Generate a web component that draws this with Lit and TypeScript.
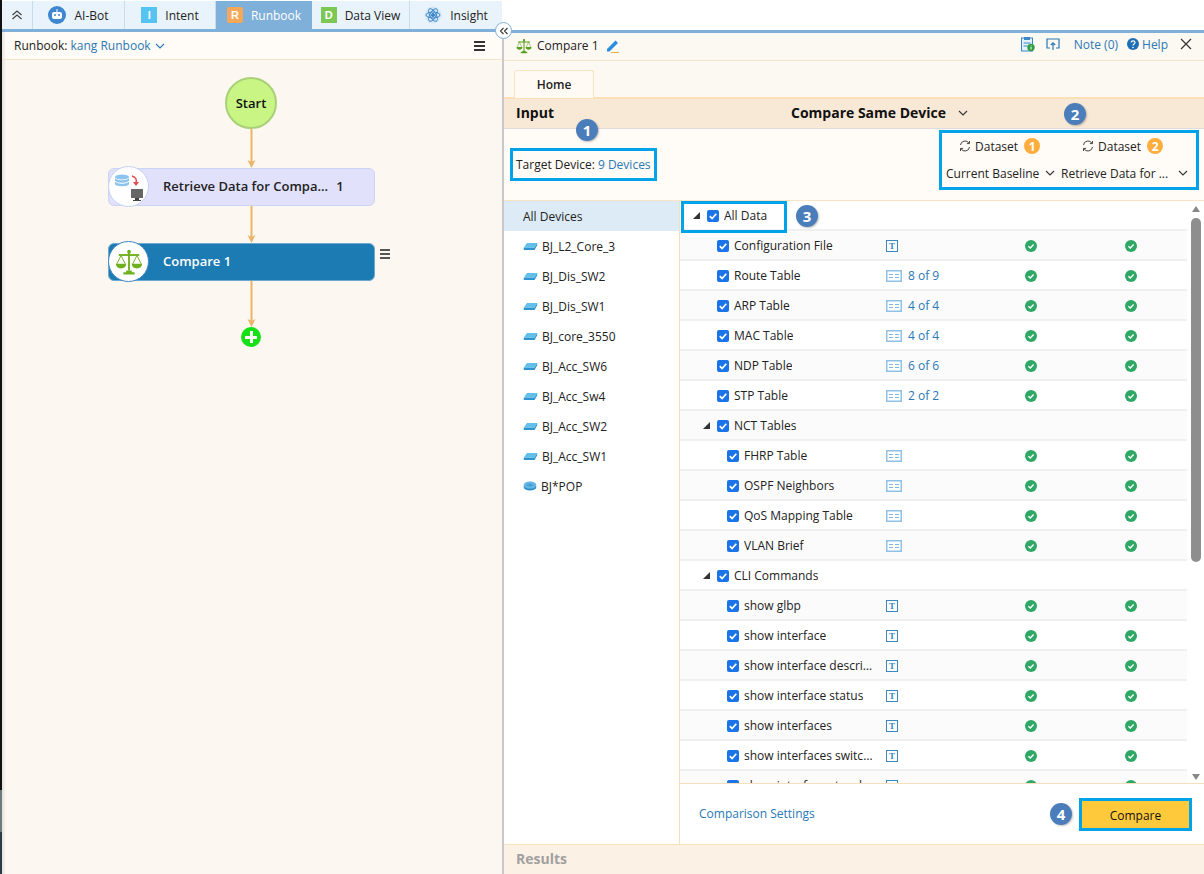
import { LitElement, html, css } from "lit";
import { customElement } from "lit/decorators.js";

const chev = (c = "#333") => html`<svg viewBox="0 0 10 6" width="10" height="6"><path d="M1 1l4 4 4-4" fill="none" stroke=${c} stroke-width="1.100"/></svg>`;
const ok = html`<svg viewBox="0 0 12 12" width="12" height="12"><circle cx="6" cy="6" r="6" fill="#2fa866"/><path d="M3.400 6.200l1.900 1.800 3.300-3.400" fill="none" stroke="#fff" stroke-width="1.400"/></svg>`;
const tIcon = html`<span class="ticon">T</span>`;
const tbl = html`<svg viewBox="0 0 16 12" width="16" height="12"><rect x=".75" y=".75" width="14.500" height="10.500" fill="#fff" stroke="#8fc1e6" stroke-width="1.500"/><path d="M3 4.500h4M9 4.500h4M3 7.500h4M9 7.500h4" stroke="#7fb6e0"/></svg>`;
const sw = html`<svg viewBox="0 0 16 10" width="15" height="9"><path d="M4 1h11.500l-3 5.500H.5z" fill="#63c0ea"/><path d="M.5 6.500h12V9H.5zM12.500 6.500l3-5.500v2.500l-3 5.500z" fill="#2e93cf"/></svg>`;
const router = html`<svg viewBox="0 0 15 11" width="14" height="10"><ellipse cx="7.500" cy="6.500" rx="7" ry="4" fill="#2e8fc6"/><ellipse cx="7.500" cy="4.500" rx="7" ry="4" fill="#63b6e4"/><path d="M4 4.500h7M7.500 2.500v4" stroke="#2e8fc6" stroke-width=".8"/></svg>`;
const refresh = html`<svg viewBox="0 0 12 12" width="12" height="12" fill="none" stroke="#444" stroke-width="1"><path d="M1.500 5A4.600 4.600 0 0 1 10 3.200"/><path d="M10.500 1v2.600H7.900"/><path d="M10.500 7A4.600 4.600 0 0 1 2 8.800"/><path d="M1.500 11V8.400h2.600"/></svg>`;
const scale = (w: number, h: number, c: string) => html`<svg viewBox="0 0 30 30" width=${w} height=${h}><g fill=${c}><path d="M14 3h2v21h-2z"/><path d="M4 6.500h22v2H4z"/><circle cx="15" cy="4" r="2"/><path d="M9 26h12v2.400H9zM12 24h6v2h-6z"/><path d="M1 17h11c0 3.200-2.400 5-5.500 5S1 20.200 1 17zM18 17h11c0 3.200-2.400 5-5.500 5S18 20.200 18 17z"/></g><path d="M6.500 8L2 17M6.500 8l4.500 9M23.500 8L19 17M23.500 8l4.500 9" stroke=${c} fill="none" stroke-width="1"/></svg>`;

type Row = { n: string; lvl: 0 | 1 | 2; caret?: boolean; icon?: "t" | "g"; count?: string; checks?: boolean };
const rows: Row[] = [
  { n: "All Data", lvl: 0, caret: true },
  { n: "Configuration File", lvl: 1, icon: "t", checks: true },
  { n: "Route Table", lvl: 1, icon: "g", count: "8 of 9", checks: true },
  { n: "ARP Table", lvl: 1, icon: "g", count: "4 of 4", checks: true },
  { n: "MAC Table", lvl: 1, icon: "g", count: "4 of 4", checks: true },
  { n: "NDP Table", lvl: 1, icon: "g", count: "6 of 6", checks: true },
  { n: "STP Table", lvl: 1, icon: "g", count: "2 of 2", checks: true },
  { n: "NCT Tables", lvl: 1, caret: true },
  { n: "FHRP Table", lvl: 2, icon: "g", checks: true },
  { n: "OSPF Neighbors", lvl: 2, icon: "g", checks: true },
  { n: "QoS Mapping Table", lvl: 2, icon: "g", checks: true },
  { n: "VLAN Brief", lvl: 2, icon: "g", checks: true },
  { n: "CLI Commands", lvl: 1, caret: true },
  { n: "show glbp", lvl: 2, icon: "t", checks: true },
  { n: "show interface", lvl: 2, icon: "t", checks: true },
  { n: "show interface description", lvl: 2, icon: "t", checks: true },
  { n: "show interface status", lvl: 2, icon: "t", checks: true },
  { n: "show interfaces", lvl: 2, icon: "t", checks: true },
  { n: "show interfaces switchport", lvl: 2, icon: "t", checks: true },
  { n: "show interfaces trunk", lvl: 2, icon: "t", checks: true },
];
const devices = ["BJ_L2_Core_3", "BJ_Dis_SW2", "BJ_Dis_SW1", "BJ_core_3550", "BJ_Acc_SW6", "BJ_Acc_Sw4", "BJ_Acc_SW2", "BJ_Acc_SW1"];

@customElement("app-root")
export class AppRoot extends LitElement {
  static styles = css`
    :host { display: block; width: 1204px; height: 874px; overflow: hidden; font: 12px "Open Sans", sans-serif; color: #222; background: #fff; }
    * { box-sizing: border-box; }
    svg { display: block; flex: none; }
    .page { height: 874px; display: flex; position: relative; }
    .edge { width: 2px; flex: none; background: linear-gradient(180deg, #111 0, #111 790px, #6c7a80 790px, #6c7a80 832px, #2b3a44 832px); }
    .col { flex: 1; min-width: 0; display: flex; flex-direction: column; }
    .topbar { height: 32px; flex: none; display: flex; border-bottom: 3px solid #7eb0d9; background: #fff; padding-top: 1px; width: 501px; }
    .tab { display: flex; align-items: center; justify-content: center; gap: 8px; background: #e9f3fb; border-right: 1px solid #c9dcea; height: 28px; font-size: 12px; color: #222; flex: none; }
    .tab.active { background: #7eb0d9; color: #fff; border-right: none; }
    .ti { width: 16px; height: 16px; display: flex; align-items: center; justify-content: center; font: bold 11px "Liberation Sans", sans-serif; color: #fff; }
    .main { flex: 1; display: flex; min-height: 0; margin-top: -2px; }
    .left { width: 500px; flex: none; display: flex; flex-direction: column; background: linear-gradient(90deg, #e4dfd9 0, #fcf7f1 4px); margin-top: 2px; }
    .lhead { height: 28px; flex: none; display: flex; align-items: center; justify-content: space-between; padding: 0 17px 0 12px; background: linear-gradient(90deg, #e8e4de 0, #fffbf6 4px); border-bottom: 1px solid #f6e3c9; }
    .lhead .who { display: flex; align-items: center; gap: 4px; }
    .link { color: #2a78b5; }
    .hamb { width: 11px; height: 10px; border-top: 2px solid #333; border-bottom: 2px solid #333; position: relative; }
    .hamb::after { content: ""; position: absolute; left: 0; right: 0; top: 2px; height: 2px; background: #333; }
    .canvas { flex: 1; display: flex; flex-direction: column; padding: 17px 0 0 106px; }
    .flowcol { width: 267px; display: flex; flex-direction: column; align-items: flex-start; }
    .start { width: 52px; height: 52px; margin-left: 117px; border-radius: 50%; background: #c8f584; border: 2px solid #aad078; display: flex; align-items: center; justify-content: center; font-size: 13px; font-weight: 600; color: #111; }
    .arrow { width: 9px; display: block; flex: none; margin-left: 138.500px; }
    .node { width: 267px; height: 38px; position: relative; border-radius: 6px; display: flex; align-items: center; padding: 0 0 2px 54px; font-size: 13px; font-weight: 600; }
    .node.a { background: #e1e1fb; border: 1px solid #ccd4f5; color: #222; gap: 8px; }
    .node.b { background: #1b7bb2; border: 1px solid #6fa8cf; color: #fff; }
    .disc { position: absolute; left: -1px; top: -3px; width: 41px; height: 41px; border-radius: 50%; background: #fff; border: 1px solid #c3d1f5; display: flex; align-items: center; justify-content: center; }
    .node.b .disc { border-color: #3f86c4; }
    .nmenu { position: absolute; left: 271px; top: 5px; width: 10px; height: 10px; border-top: 2px solid #555; border-bottom: 2px solid #555; }
    .nmenu::after { content: ""; position: absolute; left: 0; right: 0; top: 2px; height: 2px; background: #555; }
    .plus { width: 20px; height: 20px; margin-left: 133px; border-radius: 50%; background: #16e016; position: relative; flex: none; }
    .plus::before { content: ""; position: absolute; left: 4px; right: 4px; top: 8.500px; height: 3px; background: #fff; }
    .plus::after { content: ""; position: absolute; top: 4px; bottom: 4px; left: 8.500px; width: 3px; background: #fff; }
    .divider { width: 2px; flex: none; background: #c9c9c9; margin-top: 2px; }
    .collapse { position: absolute; left: 495px; top: 22px; width: 17px; height: 17px; border-radius: 50%; background: #fff; border: 1px solid #7eb0d9; display: flex; align-items: center; justify-content: center; }
    .right { flex: 1; min-width: 0; display: flex; flex-direction: column; border-top: 3px solid #7eb0d9; background: #fcf8f2; }
    .rtitle { height: 29px; flex: none; display: flex; align-items: center; padding: 0 12px 1px 12px; border-bottom: 1px solid #f6e3c9; margin-top: -1px; }
    .rtitle .name { margin-left: 5px; }
    .rtitle .pen { margin-left: 7px; }
    .grow { flex: 1; }
    .rt-r { display: flex; align-items: center; margin-bottom: 3px; }
    .tabs { height: 38px; flex: none; display: flex; align-items: flex-end; padding-left: 10px; border-bottom: 2px solid #fbdfb6; }
    .home { width: 80px; height: 28px; border: 1px solid #f9e3c4; border-bottom: none; border-radius: 3px 3px 0 0; background: #fffaf3; display: flex; align-items: center; justify-content: center; font-weight: 600; font-size: 12px; margin-bottom: -1px; }
    .inputbar { height: 30px; flex: none; background: #f8e9d6; border-bottom: 1px solid #ddd; display: flex; align-items: center; padding: 0 0 2px 12px; font: 700 14px "Open Sans", sans-serif; color: #111; }
    .inputbar .mid { margin-left: 237px; display: flex; align-items: center; gap: 12px; }
    .target { height: 71px; flex: none; background: #fffbf6; display: flex; justify-content: space-between; align-items: flex-start; padding: 1px 5px 0 6px; position: relative; }
    .hl { border: 3px solid #00a3e8; }
    .tbox { margin-top: 18px; width: 147px; height: 33px; display: flex; align-items: center; padding-left: 3px; gap: 3px; background: #fffbf6; white-space: nowrap; }
    .dbox { width: 260px; height: 60px; display: grid; grid-template-columns: 116px 140px; grid-template-rows: 26px 28px; background: #fffbf6; }
    .dh { display: flex; align-items: center; gap: 4px; padding-left: 17px; }
    .dh + .dh { padding-left: 24px; }
    .num { width: 16px; height: 16px; border-radius: 50%; background: #ffad3d; color: #fff; font: 700 12px "Open Sans", sans-serif; display: flex; align-items: center; justify-content: center; margin-left: 2px; }
    .dsel { display: flex; align-items: center; justify-content: space-between; padding: 0 3px 0 4px; white-space: nowrap; }
    .dsel + .dsel { padding: 0 10px 0 3px; }
    .body { flex: 1; min-height: 0; display: flex; background: #fff; border-top: 1px solid #f8e3c6; }
    .devs { width: 176px; flex: none; border-right: 1px solid #f8dfbb; }
    .dev { height: 30px; display: flex; align-items: center; gap: 4px; padding-left: 19px; }
    .dev.all { background: #dcebf6; }
    .data { flex: 1; min-width: 0; display: flex; flex-direction: column; }
    .tree { flex: 1; min-height: 0; overflow: hidden; position: relative; }
    .row { height: 30px; width: 507px; display: grid; grid-template-columns: 201px 100px 100px 100px; align-items: center; border-bottom: 2px solid #f0f0f0; padding-top: 1px; }
    .row:nth-child(even) { background: #fbfbfb; }
    .nm { display: flex; align-items: center; min-width: 0; position: relative; }
    .nm.l0 { padding-left: 13px; }
    .nm.l1 { padding-left: 37px; }
    .nm.l2 { padding-left: 47px; }
    .nm.caret.l1 { padding-left: 23px; }
    .tri { width: 0; height: 0; border-left: 7px solid transparent; border-bottom: 7px solid #333; margin-right: 7px; flex: none; }
    .cb { width: 12px; height: 12px; border-radius: 2px; background: #1a73e8; display: flex; align-items: center; justify-content: center; flex: none; margin-right: 5px; }
    .txt { overflow: hidden; white-space: nowrap; text-overflow: ellipsis; max-width: 131px; }
    .ty { display: flex; align-items: center; gap: 6px; padding-left: 5px; color: #2a78b5; }
    .ticon { width: 12px; height: 12px; border: 1px solid #3a88bd; color: #3a88bd; font: 700 9px "Liberation Serif", serif; display: flex; align-items: center; justify-content: center; }
    .ck { display: flex; justify-content: center; padding-top: 1px; }
    .box3 { position: absolute; left: 1px; top: 0; width: 106px; height: 32px; pointer-events: none; }
    .sb { position: absolute; left: 507px; top: 0; bottom: 0; width: 17px; background: #fff; display: flex; flex-direction: column; align-items: center; }
    .sb .up { width: 0; height: 0; border-left: 4.500px solid transparent; border-right: 4.500px solid transparent; border-bottom: 6px solid #888; margin-top: 5px; }
    .sb .thumb { width: 10px; height: 344px; border-radius: 5px; background: #8e8e8e; margin-top: 6px; }
    .sb .dn { width: 0; height: 0; border-left: 4.500px solid transparent; border-right: 4.500px solid transparent; border-top: 6px solid #888; margin-top: auto; margin-bottom: 3px; }
    .foot { height: 61px; flex: none; border-top: 1px solid #f8dfbb; display: flex; align-items: center; justify-content: space-between; padding: 0 12px 0 19px; background: #fff; position: relative; }
    .foot .link { margin-bottom: 2px; }
    .cmp { width: 113px; height: 33px; background: #ffc93c; display: flex; align-items: center; justify-content: center; color: #111; font-size: 12px; padding-top: 2px; }
    .results { height: 30px; flex: none; background: #fcf1e5; border-top: 1px solid #f8dfbb; display: flex; align-items: center; padding: 0 0 2px 12px; font: 700 14px "Open Sans", sans-serif; color: #a0a0a0; }
    .badge { position: absolute; width: 22px; height: 22px; border-radius: 50%; background: #4a7dba; color: #fff; font: 700 15px "Open Sans", sans-serif; display: flex; align-items: center; justify-content: center; box-shadow: 1px 1px 2px rgba(0,0,0,.25); }
    .dbicon { margin-left: -3px; }
  `;

  private check() {
    return html`<span class="cb"><svg viewBox="0 0 12 12" width="12" height="12"><path d="M2.800 6.200l2.300 2.300 4.200-4.700" fill="none" stroke="#fff" stroke-width="1.700"/></svg></span>`;
  }

  private arrow(h: number) {
    return html`<svg class="arrow" viewBox="0 0 9 ${h}" height=${h}><path d="M4.500 0V${h - 3}" stroke="#ecb469" stroke-width="2"/><path d="M.5 ${h - 8}L4.500 ${h}l4-8-4 2z" fill="#ecb469"/></svg>`;
  }

  render() {
    return html`<div class="page">
      <div class="edge"></div>
      <div class="col">
      <div class="topbar">
        <div class="tab" style="width:31px"><svg viewBox="0 0 12 12" width="12" height="12" fill="none" stroke="#444" stroke-width="1.200"><path d="M1.500 6l4.500-4 4.500 4M1.500 10l4.500-4 4.500 4"/></svg></div>
        <div class="tab" style="width:92px">
          <svg viewBox="0 0 18 18" width="18" height="18"><circle cx="9" cy="9" r="9" fill="#3f86d0"/><rect x="4" y="6" width="10" height="7" rx="2" fill="#fff"/><circle cx="7" cy="9" r="1" fill="#3f86d0"/><circle cx="11" cy="9" r="1" fill="#3f86d0"/><path d="M9 3v3" stroke="#fff"/></svg>AI-Bot</div>
        <div class="tab" style="width:91px"><span class="ti" style="background:#55c4f2">I</span><span>Intent</span></div>
        <div class="tab active" style="width:96px"><span class="ti" style="background:#f5a85a;border-radius:2px">R</span><span>Runbook</span></div>
        <div class="tab" style="width:98px"><span class="ti" style="background:#7dc855">D</span><span>Data View</span></div>
        <div class="tab" style="width:92px;border-right:none">
          <svg viewBox="0 0 18 18" width="18" height="18" fill="none" stroke="#3a86c8"><circle cx="9" cy="9" r="8.500" fill="#d5e8f7" stroke="none"/><ellipse cx="9" cy="9" rx="7" ry="3"/><ellipse cx="9" cy="9" rx="7" ry="3" transform="rotate(60 9 9)"/><ellipse cx="9" cy="9" rx="7" ry="3" transform="rotate(120 9 9)"/><circle cx="9" cy="9" r="1.500" fill="#3a86c8"/></svg>Insight</div>
      </div>
      <div class="main">
        <section class="left">
          <div class="lhead"><span class="who"><span>Runbook: <span class="link">kang Runbook</span></span>${chev("#2a78b5")}</span><span class="hamb"></span></div>
          <div class="canvas"><div class="flowcol">
            <div class="start">Start</div>
            ${this.arrow(39)}
            <div class="node a"><span class="disc">
              <svg class="dbicon" viewBox="0 0 32 32" width="32" height="32"><ellipse cx="11" cy="6" rx="7" ry="2.500" fill="#8cc4ee"/><path d="M4 7v6c0 3 14 3 14 0V7c-2 3-12 3-14 0z" fill="#8cc4ee"/><path d="M4 10c2 3 12 3 14 0" stroke="#fff" fill="none"/><path d="M21 5c4 1 5 4 4 7" stroke="#e84b4b" fill="none" stroke-width="1.500"/><path d="M22 11h6l-3 4z" fill="#e84b4b"/><rect x="20" y="18" width="12" height="9" fill="#666"/><rect x="24" y="27" width="4" height="2" fill="#444"/><rect x="22" y="29" width="8" height="1" fill="#444"/></svg>
            </span><span>Retrieve Data for Compa...</span><span>1</span></div>
            ${this.arrow(37)}
            <div class="node b"><span class="disc">${scale(28, 28, "#6fb01e")}</span><span>Compare 1</span><span class="nmenu"></span></div>
            ${this.arrow(46)}
            <div class="plus"></div>
          </div></div>
        </section>
        <div class="divider"></div>
        <section class="right">
          <div class="rtitle">
            ${scale(16, 16, "#5b9e1f")}<span class="name">Compare 1</span>
            <svg class="pen" viewBox="0 0 14 14" width="14" height="14"><path d="M1 10L9.500 1.500l2.500 2.500L3.500 12.500H1z" fill="#2b8ee0"/><path d="M5 13h8v1H5z" fill="#f4a640"/></svg>
            <span class="grow"></span>
            <div class="rt-r">
              <svg viewBox="0 0 14 16" width="14" height="16"><rect x=".5" y="2" width="11" height="13" fill="#e6f2fb" stroke="#3a86c8"/><path d="M3 1h6v3H3z" fill="#3a86c8"/><path d="M2.500 7h7M2.500 10h4" stroke="#3a86c8"/><circle cx="10" cy="11.500" r="3.700" fill="#2f9e44"/><path d="M10 9.500v.8M10 11v2.500" stroke="#fff"/></svg>
              <svg style="margin-left:11px" viewBox="0 0 14 14" width="14" height="14" fill="none" stroke="#2a78b5" stroke-width="1.200"><path d="M4 11H1V2h12v9h-3"/><path d="M7 13V6M4.800 8L7 5.800 9.200 8"/></svg>
              <span class="link" style="margin-left:14px">Note (0)</span>
              <svg style="margin-left:9px" viewBox="0 0 12 12" width="12" height="12"><circle cx="6" cy="6" r="6" fill="#1d6fb5"/><path d="M4.200 4.600c0-2.400 3.800-2.400 3.800 0 0 1.400-2 1.400-2 3" stroke="#fff" fill="none" stroke-width="1.200"/><circle cx="6" cy="9.500" r=".8" fill="#fff"/></svg>
              <span class="link" style="margin-left:3px">Help</span>
              <svg style="margin-left:12px" viewBox="0 0 12 12" width="12" height="12"><path d="M1 1l10 10M11 1L1 11" stroke="#333" stroke-width="1.200"/></svg>
            </div>
          </div>
          <div class="tabs"><div class="home">Home</div></div>
          <div class="inputbar"><span>Input</span><span class="mid">Compare Same Device ${chev()}</span></div>
          <div class="target">
            <div class="hl tbox"><span>Target Device:</span><span class="link">9 Devices</span></div>
            <div class="hl dbox">
              <div class="dh">${refresh}<span>Dataset</span><span class="num">1</span></div>
              <div class="dh">${refresh}<span>Dataset</span><span class="num">2</span></div>
              <div class="dsel"><span>Current Baseline</span>${chev()}</div>
              <div class="dsel"><span>Retrieve Data for ...</span>${chev()}</div>
            </div>
          </div>
          <div class="body">
            <div class="devs">
              <div class="dev all">All Devices</div>
              ${devices.map((d) => html`<div class="dev">${sw}<span>${d}</span></div>`)}
              <div class="dev">${router}<span>BJ*POP</span></div>
            </div>
            <div class="data">
              <div class="tree">
                ${rows.map((r) => html`<div class="row">
                  <div class="nm l${r.lvl} ${r.caret ? "caret" : ""}">${r.caret ? html`<span class="tri"></span>` : ""}${this.check()}<span class="txt">${r.n}</span></div>
                  <div class="ty">${r.icon === "t" ? tIcon : r.icon === "g" ? tbl : ""}${r.count ? html`<span>${r.count}</span>` : ""}</div>
                  <div class="ck">${r.checks ? ok : ""}</div>
                  <div class="ck">${r.checks ? ok : ""}</div>
                </div>`)}
                <div class="hl box3"></div>
                <div class="sb"><span class="up"></span><span class="thumb"></span><span class="dn"></span></div>
              </div>
              <div class="foot"><span class="link">Comparison Settings</span><div class="hl cmp">Compare</div></div>
            </div>
          </div>
          <div class="results">Results</div>
        </section>
      </div>
      </div>
      <span class="badge" style="left:576px;top:119px">1</span>
      <span class="badge" style="left:1064px;top:103px">2</span>
      <span class="badge" style="left:796px;top:205px">3</span>
      <span class="badge" style="left:1050px;top:803px">4</span>
      <div class="collapse"><svg viewBox="0 0 10 8" width="10" height="8" fill="none" stroke="#333" stroke-width="1.100"><path d="M4.500 1L1.500 4l3 3M8.500 1l-3 3 3 3"/></svg></div>
    </div>`;
  }
}
